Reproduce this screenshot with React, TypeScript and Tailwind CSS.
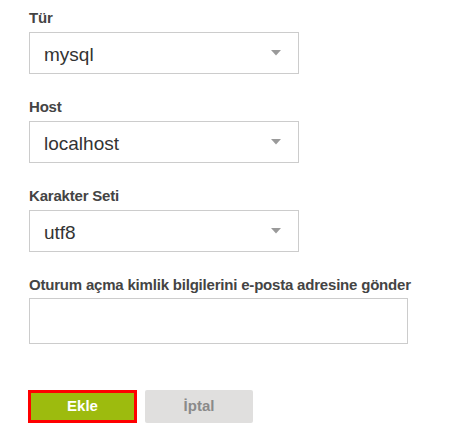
const fields = [
  { label: "Tür", value: "mysql" },
  { label: "Host", value: "localhost" },
  { label: "Karakter Seti", value: "utf8" },
];

function Caret() {
  return (
    <svg width="10" height="6" viewBox="0 0 10 6" className="shrink-0">
      <path d="M0 0 H10 L5 5.5 Z" fill="#9a9a9a" />
    </svg>
  );
}

export default function App() {
  return (
    <div
      className="h-[440px] w-[465px] bg-white pl-[29px] pt-[9px] text-[#444]"
      style={{ fontFamily: '"Liberation Sans", Arial, sans-serif' }}
    >
      {fields.map((f) => (
        <div key={f.label} className="mb-[24px]">
          <label className="mb-[6px] block text-[15px] font-bold leading-[17px] tracking-[-0.2px]">
            {f.label}
          </label>
          <div className="flex h-[42px] w-[270px] items-center justify-between border border-[#cccccc] pl-[14px] pr-[17px]">
            <span className="pt-[3px] text-[19px] leading-none text-[#333]">{f.value}</span>
            <Caret />
          </div>
        </div>
      ))}
      <div>
        <label className="mb-[5px] block text-[15px] font-bold leading-[17px] tracking-[-0.2px]">
          Oturum açma kimlik bilgilerini e-posta adresine gönder
        </label>
        <div className="h-[46px] w-[379px] border border-[#cccccc]" />
      </div>
      <div className="-ml-[1px] mt-[46px] flex gap-[8px]">
        <button className="h-[33px] w-[109px] border-[3px] border-[#ff0000] bg-[#9dbb0e] text-[15px] font-bold text-white">
          Ekle
        </button>
        <button className="h-[33px] w-[108px] rounded-[2px] bg-[#e0dfde] text-[15px] font-bold text-[#8a8a8a]">
          İptal
        </button>
      </div>
    </div>
  );
}
